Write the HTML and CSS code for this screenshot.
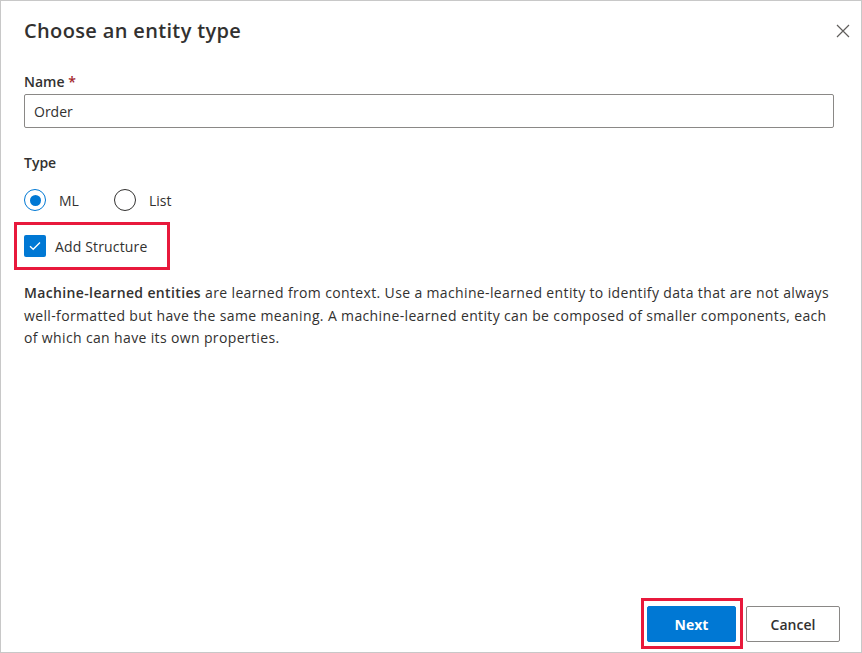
FILE: index.html
```html
<!DOCTYPE html>
<html lang="en">
<head>
<meta charset="utf-8">
<title>Choose an entity type</title>
<link rel="stylesheet" href="styles.css">
</head>
<body>
<div class="dialog">
  <div class="header">
    <h1 class="title">Choose an entity type</h1>
    <button class="close" aria-label="Close">
      <svg width="14" height="14" viewBox="0 0 14 14"><path d="M1 1 L13 13 M13 1 L1 13" stroke="#605e5c" stroke-width="1.2" fill="none"/></svg>
    </button>
  </div>

  <label class="label">Name <span class="req">*</span></label>
  <div class="input">Order</div>

  <div class="label type-label">Type</div>
  <div class="radios">
    <div class="radio checked"><span class="circle"></span><span>ML</span></div>
    <div class="radio"><span class="circle"></span><span>List</span></div>
  </div>

  <div class="highlight">
    <span class="checkbox">
      <svg width="12" height="10" viewBox="0 0 12 10"><path d="M1 5.2 L4.2 8.3 L11 1.5" stroke="#fff" stroke-width="1.3" fill="none"/></svg>
    </span>
    <span>Add Structure</span>
  </div>

  <p class="desc"><strong>Machine-learned entities</strong> are learned from context. Use a machine-learned entity to identify data that are not always well-formatted but have the same meaning. A machine-learned entity can be composed of smaller components, each of which can have its own properties.</p>

  <div class="footer">
    <div class="next-wrap"><button class="btn primary">Next</button></div>
    <button class="btn">Cancel</button>
  </div>
</div>
</body>
</html>
```
FILE: styles.css
```css
* { box-sizing: border-box; }
html, body { margin: 0; padding: 0; background: #fff; }
body {
  font-family: "Open Sans", "Noto Sans", "Liberation Sans", sans-serif;
  color: #323130;
  font-size: 14px;
}
.dialog {
  width: 862px;
  height: 653px;
  border: 1px solid #c8c8c8;
  padding: 0 27px 0 23px;
  display: flex;
  flex-direction: column;
}
.header {
  display: flex;
  justify-content: space-between;
  align-items: center;
  margin-top: 16px;
  margin-right: -16px;
}
.title {
  margin: 0;
  font-size: 20px;
  font-weight: 600;
  line-height: 28px;
  letter-spacing: 0.35px;
}
.close {
  border: 0;
  background: none;
  padding: 0;
  width: 14px;
  height: 14px;
  display: flex;
}
.label {
  display: block;
  font-weight: 600;
  line-height: 20px;
  margin-top: 27px;
}
.req { color: #a4262c; }
.input {
  margin-top: 2px;
  height: 34px;
  border: 1px solid #8a8886;
  border-radius: 2px;
  padding: 0 9px;
  display: flex;
  align-items: center;
}
.type-label { margin-top: 25px; }
.radios {
  display: flex;
  gap: 35px;
  margin-top: 17px;
  height: 20px;
  align-items: center;
}
.radio {
  display: flex;
  align-items: center;
  gap: 13px;
}
.circle {
  width: 22px;
  height: 22px;
  border-radius: 50%;
  border: 1px solid #323130;
  display: flex;
  align-items: center;
  justify-content: center;
}
.radio.checked .circle { border-color: #0078d4; }
.radio.checked .circle::after {
  content: "";
  width: 11px;
  height: 11px;
  border-radius: 50%;
  background: #0078d4;
}
.highlight {
  margin-top: 12px;
  margin-left: -10px;
  width: 156px;
  height: 48px;
  border: 3px solid #e8193c;
  display: flex;
  align-items: center;
  gap: 9px;
  padding-left: 7px;
  letter-spacing: 0.15px;
}
.checkbox {
  width: 22px;
  height: 22px;
  background: #0078d4;
  border-radius: 2px;
  display: flex;
  align-items: center;
  justify-content: center;
}
.desc {
  margin: 12px 0 0;
  line-height: 22.5px;
  letter-spacing: 0.36px;
}
.desc strong { font-weight: 600; }
.footer {
  margin-top: auto;
  margin-bottom: 10px;
  margin-right: -6px;
  display: flex;
  justify-content: flex-end;
  gap: 10px;
}
.next-wrap { position: relative; }
.next-wrap::after {
  content: "";
  position: absolute;
  top: -8px;
  left: -6px;
  right: -7px;
  bottom: -7px;
  border: 3px solid #e8193c;
  pointer-events: none;
}
.btn {
  font-family: inherit;
  font-size: 14px;
  font-weight: 600;
  height: 36px;
  border: 1px solid #8a8886;
  border-radius: 2px;
  background: #fff;
  color: #323130;
  width: 94px;
  padding: 0;
}
.btn.primary {
  width: 89px;
  background: #0078d4;
  border-color: #0078d4;
  color: #fff;
  font-weight: 700;
}
```
